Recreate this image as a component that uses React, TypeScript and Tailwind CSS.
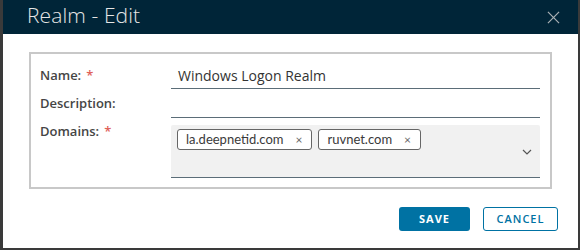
import React from "react";

function Chip({ label }: { label: string }) {
  return (
    <div
      className="flex h-[21px] items-center rounded-[3px] border border-[#666] bg-white pl-[8px] pr-[9px] text-[13px] text-[#3a3a3a]"
      style={{ fontFamily: 'Lato, "Open Sans", sans-serif' }}
    >
      <span>{label}</span>
      <span className="ml-[12px] text-[12px] leading-none text-[#666]">×</span>
    </div>
  );
}

export default function App() {
  return (
    <div
      className="h-[250px] w-[580px] bg-[#3a3a3a] pl-[3px] pr-[2px] pb-[2px]"
      style={{ fontFamily: '"Open Sans", "Noto Sans", sans-serif' }}
    >
      <div className="flex h-[248px] flex-col bg-white">
        <div className="flex h-[34px] items-center justify-between bg-[#002538] pl-[24px] pr-[18px]">
          <span className="mt-[-2px] text-[21px] font-light tracking-[0.1px] text-[#e6e6e6]">Realm - Edit</span>
          <svg width="13" height="13" viewBox="0 0 14 14">
            <path d="M1 1L13 13M13 1L1 13" stroke="#a9b0b4" strokeWidth="1.3" />
          </svg>
        </div>
        <div className="flex flex-1 flex-col px-[26px] pt-[18px]">
          <div className="flex h-[137px] flex-col border-2 border-[#c8c8c8] pl-[9px] pr-[10px] pt-[8px]">
            <div className="flex h-[27px] items-stretch">
              <div className="flex w-[131px] items-center text-[13px] font-semibold text-[#454545]">
                Name:<span className="ml-[5px] text-[#e0625a]">*</span>
              </div>
              <div className="flex flex-1 items-center border-b border-[#5b6d78] pl-[7px] text-[14px] text-[#333]">
                Windows Logon Realm
              </div>
            </div>
            <div className="flex h-[29px] items-stretch">
              <div className="flex w-[131px] items-center text-[13px] font-semibold text-[#454545]">
                Description:
              </div>
              <div className="flex-1 border-b border-[#5b6d78]" />
            </div>
            <div className="mt-[7px] flex items-start">
              <div className="flex w-[131px] items-center text-[13px] font-semibold leading-[13px] text-[#454545]">
                Domains:<span className="ml-[5px] text-[#e0625a]">*</span>
              </div>
              <div className="relative flex h-[53px] flex-1 items-start gap-[6px] rounded-t-[2px] border-b border-[#5b6d78] bg-[#f1f1f1] pl-[6px] pt-[4px]">
                <Chip label="la.deepnetid.com" />
                <Chip label="ruvnet.com" />
                <svg className="absolute right-[8px] top-[24px]" width="10" height="6" viewBox="0 0 10 6">
                  <path d="M1 1L5 5L9 1" stroke="#555" strokeWidth="1.2" fill="none" />
                </svg>
              </div>
            </div>
          </div>
          <div className="mr-[-6px] mt-[18px] flex justify-end gap-[13px]">
            <button className="h-[24px] w-[71px] rounded-[3px] bg-[#0072a3] text-[11px] font-bold tracking-[1px] text-white">
              SAVE
            </button>
            <button className="h-[24px] w-[75px] rounded-[3px] border border-[#0072a3] bg-white text-[11px] font-semibold tracking-[1px] text-[#0072a3]">
              CANCEL
            </button>
          </div>
        </div>
      </div>
    </div>
  );
}
